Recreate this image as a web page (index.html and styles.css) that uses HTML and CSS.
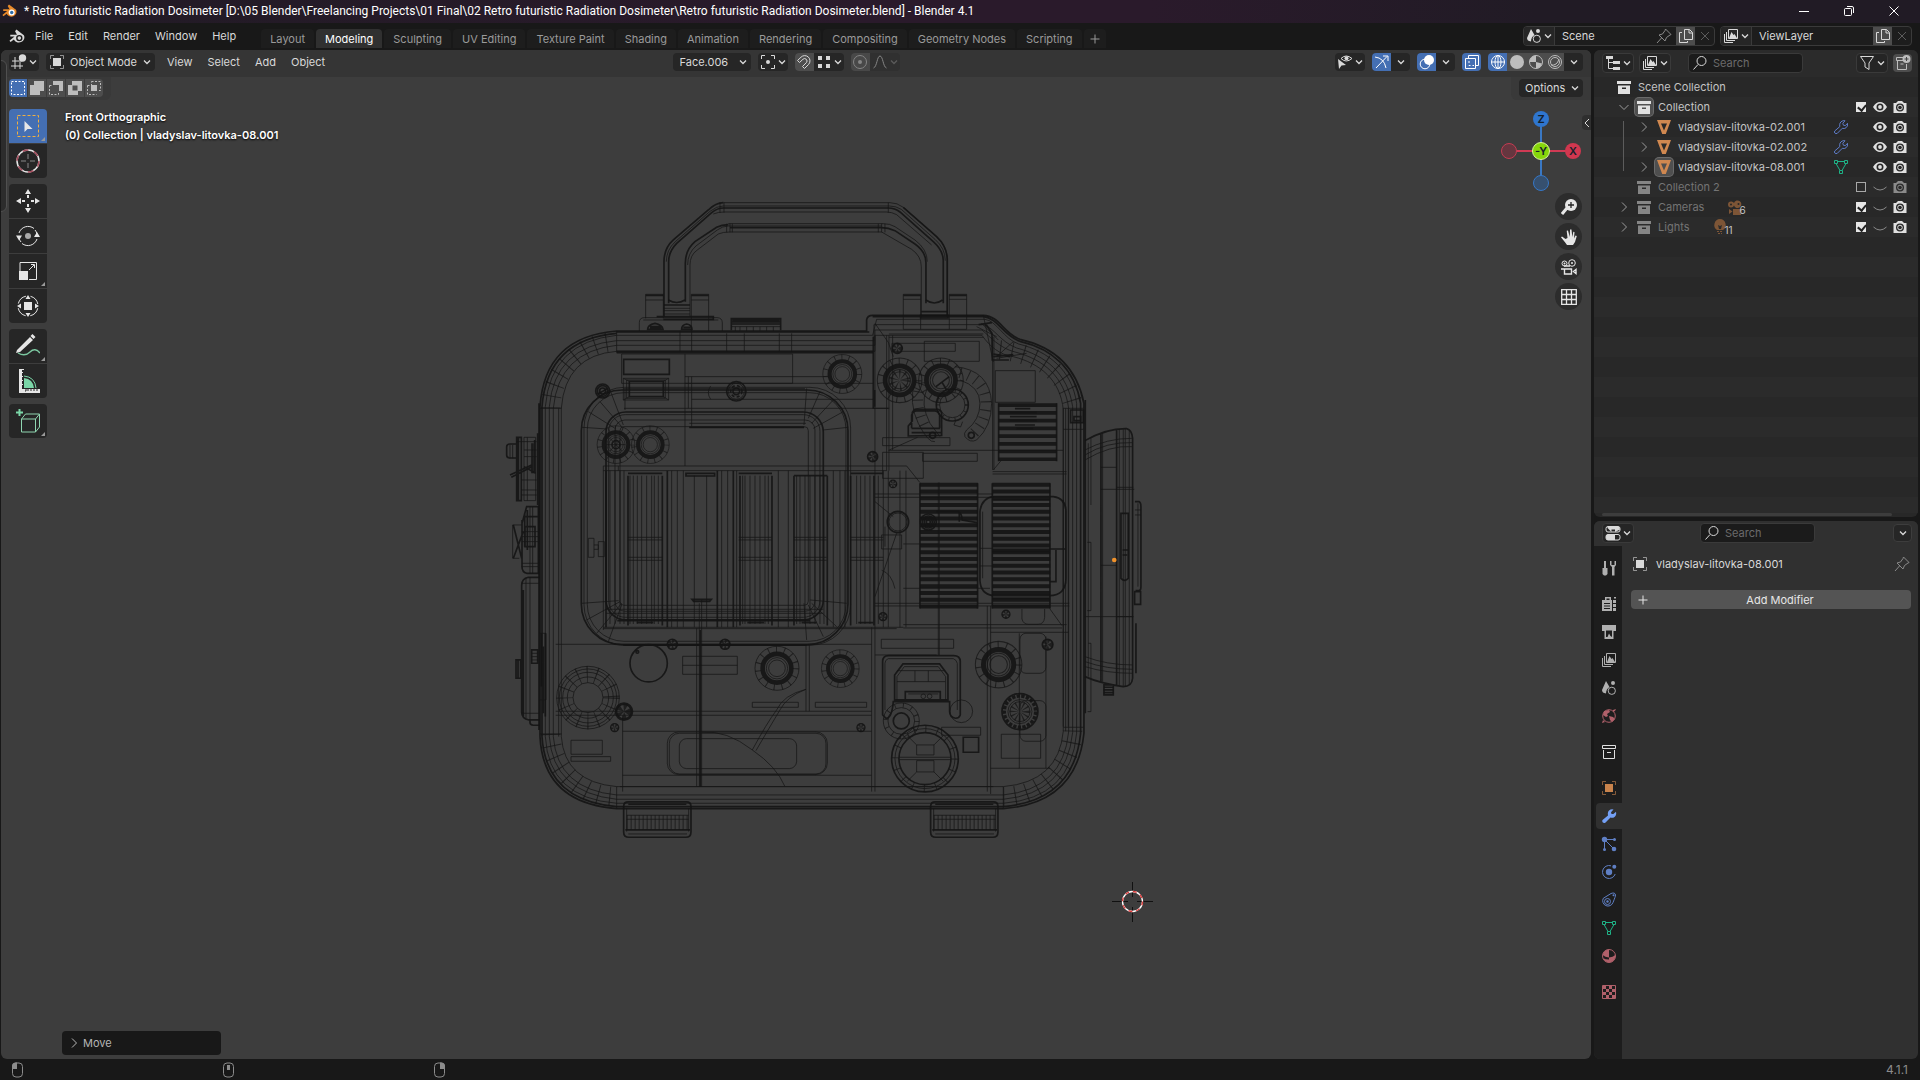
FILE: index.html
```html
<!doctype html>
<html lang="en">
<head>
<meta charset="utf-8">
<title>Retro futuristic Radiation Dosimeter - Blender 4.1</title>
<link rel="stylesheet" href="styles.css">
</head>
<body>
<svg class="defs" aria-hidden="true">
	<symbol id="chev" viewBox="0 0 8 8"><path class="ln" d="M1 2.500l3 3 3-3" stroke-width="1.300"/></symbol>
	<symbol id="chev-r" viewBox="0 0 8 12"><path class="ln" d="M2 1.500L6.500 6 2 10.500"/></symbol>
	<symbol id="cross" viewBox="0 0 16 16"><path class="ln" d="M4 4l8 8M12 4l-8 8"/></symbol>
	<symbol id="logo" viewBox="0 0 16 16"><path d="M7 1.500l7 5.300a4.900 4.600 0 1 1-9.400 4L1.500 13.200.4 12 5.200 8H1.200V6.300h6.300L5.700 3z"/><circle class="eye" cx="9.700" cy="9.500" r="3"/><circle class="pupil" cx="9.700" cy="9.500" r="1.700"/></symbol>
	<symbol id="view3d" viewBox="0 0 16 16"><path class="ln" d="M1 7h10M0 12h12M4 3v12M9 8v7"/><circle cx="11.500" cy="4" r="3.700"/></symbol>
	<symbol id="object" viewBox="0 0 16 16"><path class="ln dim" d="M1.500 5V1.500H5M11 1.500h3.500V5M14.500 11v3.500H11M5 14.500H1.500V11"/><path d="M4 4h8v8H4z"/></symbol>
	<symbol id="pivot" viewBox="0 0 16 16"><path class="ln" d="M1.500 5V1.500H5M11 1.500h3.500V5M14.500 11v3.500H11M5 14.500H1.500V11"/><circle cx="8" cy="8" r="2"/></symbol>
	<symbol id="magnet" viewBox="0 0 16 16"><path class="ln" d="M1.500 6.500L5 3.200a5.200 5.200 0 0 1 7.500 7.300L8.500 14.500 6.500 12.500 10.300 8.700a2.400 2.400 0 0 0-3.400-3.400L3.500 8.500z"/></symbol>
	<symbol id="snapto" viewBox="0 0 16 16"><path d="M2 2h4v4H2zM10 2h4v4h-4zM2 10h4v4H2zM10 10h4v4h-4z"/></symbol>
	<symbol id="prop" viewBox="0 0 16 16"><circle class="ln" cx="8" cy="8" r="6.500"/><circle cx="8" cy="8" r="2"/></symbol>
	<symbol id="falloff" viewBox="0 0 16 16"><path class="ln" d="M1.500 14C5 13 5 2 8 2s3 11 6.500 12"/></symbol>
	<symbol id="visib" viewBox="0 0 16 16"><path d="M1 5l1 10 2.500-3.500L9 11z"/><path class="ln" d="M4 4.500Q9-.5 15 4.500 9 9.500 4 4.500z"/><circle cx="9.500" cy="4.300" r="2"/></symbol>
	<symbol id="gizmo" viewBox="0 0 16 16"><path class="ln" d="M1 3q9 1 11 11M2 14L13 2.500M9 2h5v5"/></symbol>
	<symbol id="overlay" viewBox="0 0 16 16"><circle class="ln" cx="6" cy="10" r="4.800"/><circle cx="10" cy="6" r="5"/></symbol>
	<symbol id="xray" viewBox="0 0 16 16"><path class="ln" d="M1.500 4.500h10v10h-10zM4.500 4.500v-3h10v10h-3"/><path class="ln" stroke-dasharray="2 2" d="M5 7v4.500h5"/></symbol>
	<symbol id="wire" viewBox="0 0 16 16"><circle class="ln" cx="8" cy="8" r="6.500"/><ellipse class="ln" cx="8" cy="8" rx="3" ry="6.500"/><path class="ln" d="M1.500 8h13M8 1.500v13"/></symbol>
	<symbol id="solid" viewBox="0 0 16 16"><circle cx="8" cy="8" r="7"/></symbol>
	<symbol id="material" viewBox="0 0 16 16"><circle class="ln" cx="8" cy="8" r="6.500"/><path d="M8 1.500V8H1.500A6.500 6.500 0 0 1 8 1.500zM8 8l6 1.500A6.500 6.500 0 0 1 8 14.500z"/></symbol>
	<!-- material tab: filled ball with two dark quarters -->
	<symbol id="matball" viewBox="0 0 16 16"><circle class="ln" cx="8" cy="8" r="6.500"/><path d="M8 1.500v8Q4 9 1.700 7 2.500 2 8 1.500zM8 9.500q4-.5 6.300-2.500.5 6.500-6.300 7.500zM2 10q2 1.500 6 1.500v3Q3.500 14 2 10z"/></symbol>
	<symbol id="rendered" viewBox="0 0 16 16"><circle class="ln" cx="8" cy="8" r="6.500"/><circle class="ln" cx="8" cy="8" r="4.500"/><path class="ln" d="M4 11q6 1 8-6"/></symbol>
	<symbol id="scene" viewBox="0 0 16 16"><path d="M5 1L1 10q0 3 4 3.500Q5 9 8.500 7zM12 1a2 2 0 1 1 0 4 2 2 0 0 1 0-4z"/><circle class="ln" cx="10.800" cy="10.800" r="3.600"/></symbol>
	<symbol id="layers" viewBox="0 0 16 16"><path class="ln" d="M5.500 1.500h9v9h-9zM3.500 4v8.500H12M1.500 6v8.500H10"/><path d="M6 10l2.500-6 2 3 1-1L14 10z"/></symbol>
	<symbol id="pin" viewBox="0 0 16 16"><path class="ln" d="M1 15l4.500-5M3 7l6 6 1.500-3.500L14 7l1-.5L9.500 1 9 2.500 6.500 6z"/></symbol>
	<symbol id="copy" viewBox="0 0 16 16"><path class="ln" d="M6.500 1.500h5l3 3v7h-8zM11 1.500V5h3.500M4 4.500H1.500v10h8V13"/></symbol>
	<symbol id="outliner" viewBox="0 0 16 16"><path d="M1 1h7v3H1zM8 6h7v3H8zM8 12h7v3H8z"/><path class="ln" d="M3.500 4v9.500H8M3.500 7.500H8"/></symbol>
	<symbol id="search" viewBox="0 0 16 16"><circle class="ln" cx="9.500" cy="6" r="4.500"/><path class="ln" d="M6 9.500L1.500 14.500"/></symbol>
	<symbol id="filter" viewBox="0 0 16 16"><path class="ln" d="M1.500 1.500h13L10 8v6.500L6 12V8z"/></symbol>
	<symbol id="newcol" viewBox="0 0 16 16"><path class="ln" d="M8 2.500H1.500v3h7M2.500 6v8.500h9V9M5.500 9h3"/><path d="M11.500 0a4 4 0 1 1 0 8 4 4 0 0 1 0-8z"/><path d="M11.500 2v4M9.500 4h4" stroke="#444"/></symbol>
	<symbol id="coll" viewBox="0 0 16 16"><path fill-rule="evenodd" d="M1 2h14v3H1zM2 6.500h12V15H2zM6 8.500V10h4V8.500z"/></symbol>
	<symbol id="coll-o" viewBox="0 0 16 16"><path class="ln" d="M1.500 1.500h13v3h-13zM2.500 6v8.500h11V6M6 8.500h4"/></symbol>
	<symbol id="mesh" viewBox="0 0 16 16"><path fill-rule="evenodd" d="M1 1h14L9.800 15H6.200zM5 4.500l3 7 3-7z"/></symbol>
	<symbol id="meshdata" viewBox="0 0 16 16"><path class="ln" d="M1.500 1.500h3v3h-3zM11.500 1.500h3v3h-3zM6.500 11.500h3v3h-3zM4.500 2.500h7M3 4.500l4 7M13 4.500l-4 7"/></symbol>
	<symbol id="wrench" viewBox="0 0 16 16"><path d="M1.500 12L7 7.500Q6 3 9.500 1.500q1.500-.7 3 0L10 4.200l.5 1.700 1.900.2L15 3.700q.8 3.500-1.500 5.200-1.800 1.300-4 .6L4.300 14.800q-1.600.8-2.700-.5-.8-1.300-.1-2.300z"/></symbol>
	<symbol id="wrench-o" viewBox="0 0 16 16"><path class="ln" d="M1.700 12L6.800 7.600Q6 3.500 9.300 2q1.500-.7 2.700-.2L9.800 4.200l.6 2 2 .4L14.500 4.300q.6 3-1.500 4.500-1.700 1.200-3.700.5L4.300 14.300q-1.600.8-2.500-.3-.7-1.100-.1-2z"/></symbol>
	<symbol id="eye" viewBox="0 0 16 16"><path fill-rule="evenodd" d="M1 8q3-5 7-5t7 5q-3 5-7 5T1 8zM8 4.500a3.500 3.500 0 1 0 0 7 3.500 3.500 0 0 0 0-7z"/><circle cx="8" cy="8" r="1.900"/></symbol>
	<symbol id="eye-off" viewBox="0 0 16 16"><path class="ln" d="M1.500 8q6.500 6 13 0"/></symbol>
	<symbol id="cam" viewBox="0 0 16 16"><path fill-rule="evenodd" d="M1.500 4H4l2-2h4l2 2h2.500v10h-13zM8 4.500a4 4 0 1 0 0 8 4 4 0 0 0 0-8z"/><circle class="ln" cx="8" cy="8.500" r="2.300"/></symbol>
	<symbol id="movie" viewBox="0 0 16 16"><path fill-rule="evenodd" d="M4 2.500a3 3 0 0 0 0 6 3 3 0 0 0 3-2 3.800 3.800 0 1 0 0-2.500 3 3 0 0 0-3-1.500zM4 4.500a1 1 0 1 1 0 2 1 1 0 0 1 0-2zM11.500 4a1 1 0 1 1 0 2 1 1 0 0 1 0-2z"/><path d="M6 10h8v6H6zM2 10l3.500 2.500L2 15z"/></symbol>
	<symbol id="bulb" viewBox="0 0 16 16"><path fill-rule="evenodd" d="M8 0a6 6 0 0 1 3 11H5A6 6 0 0 1 8 0zM6 6l1 4h2l1-4-2 1z"/><path class="ln" stroke-dasharray="2 1" d="M5 12.500h6M6 14.500h4"/></symbol>
	<symbol id="props" viewBox="0 0 16 16"><rect class="ln" x="1" y="1.500" width="14" height="5.500" rx="2"/><rect class="ln" x="1" y="9.500" width="14" height="5.500" rx="2"/><path d="M2.500 1.500H13Q15 2 15 4.500L10 7V4.500H6.500V7L2.500 3zM2.500 9.500H10V15H2.500Q1 15 1 12t1.500-2.500z"/></symbol>
	<symbol id="tool" viewBox="0 0 16 16"><path d="M3 1h2v7h1.500v6L5 15.500H3L1.500 14V8H3zM9 1v4l2 2v8.500h2.500V7L15 5V1h-1.500v4h-3V1z"/></symbol>
	<symbol id="render" viewBox="0 0 16 16"><path fill-rule="evenodd" d="M4 1h6v3h1v11H1V4h3zM5.500 2.500V4h3V2.500zM3 7v1h6V7zM3 9.500v1h6v-1zM3 12v1h6v-1z"/><path d="M12 4h3v3h-3zM12 8h3v3h-3zM12 12h3v3h-3zM13 1h2v1.500h-2z"/></symbol>
	<symbol id="output" viewBox="0 0 16 16"><path fill-rule="evenodd" d="M1 1h14v6h-2.500v8h-9V7H1zM5 6.500V13h1.500L8 9.500l1.500 2.500L11 13V6.500z"/></symbol>
	<symbol id="world" viewBox="0 0 16 16"><circle class="ln" cx="8" cy="8" r="6.300"/><path d="M3 3l5-1 1 2-3 2 1 2-2 1-3-2zM8 8l4 1 2 2-3 3-2-2zM12 4l2-1 1-2-3 1zM1 15l1-3 2 2z"/></symbol>
	<symbol id="particles" viewBox="0 0 16 16"><circle cx="3.500" cy="3.500" r="2.700"/><circle cx="13" cy="13" r="2.300"/><circle cx="13.500" cy="3.500" r="1.500"/><circle cx="3.500" cy="13.500" r="1.500"/><path class="ln" d="M3.500 3.500h10M3.500 3.500v10M3.500 3.500L13 13"/></symbol>
	<symbol id="physics" viewBox="0 0 16 16"><path class="ln" d="M10 1.800A6.500 6.500 0 1 0 14.200 10"/><circle cx="8" cy="8" r="3.200"/><circle cx="13.300" cy="2.700" r="2"/></symbol>
	<symbol id="constraint" viewBox="0 0 16 16"><path class="ln" d="M2.300 6.300L10 1.500q4-1.500 4.500 1.500 0 1.500-2.500 7.500A5.300 5.300 0 1 1 2.300 6.300z"/><circle class="ln" cx="6.500" cy="9.500" r="3"/><circle cx="6.500" cy="9.500" r="1.200"/><circle cx="12.500" cy="3.300" r="1"/></symbol>
	<symbol id="texture" viewBox="0 0 16 16"><path class="ln" d="M1.500 1.500h13v13h-13z"/><path d="M2 2h3v3H2zM8 2h3v3H8zM5 5h3v3H5zM11 5h3v3h-3zM2 8h3v3H2zM8 8h3v3H8zM5 11h3v3H5zM11 11h3v3h-3z"/></symbol>
	<symbol id="mouse-l" viewBox="0 0 16 16"><rect class="ln" x="2.500" y="1" width="10" height="14" rx="3.500"/><path d="M2 7V4q0-3 3-3.500h2V7z"/></symbol>
	<symbol id="mouse-m" viewBox="0 0 16 16"><rect class="ln" x="2.500" y="1" width="10" height="14" rx="3.500"/><path d="M6 3h3v5H6z"/></symbol>
	<symbol id="mouse-r" viewBox="0 0 16 16"><rect class="ln" x="2.500" y="1" width="10" height="14" rx="3.500"/><path d="M13 7V4q0-3-3-3.500H8V7z"/></symbol>
	<!-- knob seen from the front: scale ring, grip, cap -->
	<symbol id="knob" viewBox="0 0 140 140" overflow="visible">
		<circle class="w" cx="70" cy="70" r="66"/>
		<circle class="w" cx="70" cy="70" r="57" stroke-width="18" stroke-dasharray="3 21"/>
		<circle class="k" cx="70" cy="70" r="43" stroke-width="14"/>
		<circle class="w" cx="70" cy="70" r="32"/><circle class="w" cx="70" cy="70" r="25"/>
	</symbol>
	<symbol id="screw" viewBox="0 0 40 40" overflow="visible"><circle class="k" cx="20" cy="20" r="15"/><circle class="w" cx="20" cy="20" r="8" stroke-width="14" stroke-dasharray="5 4"/></symbol>
</svg>

<header class="titlebar">
	<svg class="i orange"><use href="#logo"/></svg>
	<h1>* Retro futuristic Radiation Dosimeter [D:\05 Blender\Freelancing Projects\01 Final\02 Retro futuristic Radiation Dosimeter\Retro futuristic Radiation Dosimeter.blend] - Blender 4.1</h1>
	<div class="winctl">
		<button aria-label="Minimize"><svg viewBox="0 0 12 12"><path class="ln" d="M1 6.500h10"/></svg></button>
		<button aria-label="Restore"><svg viewBox="0 0 12 12"><rect class="ln" x="1.500" y="3.500" width="7" height="7" rx="1"/><path class="ln" d="M4 1.500h5q1.500 0 1.500 1.500v5"/></svg></button>
		<button aria-label="Close"><svg viewBox="0 0 12 12"><path class="ln" d="M1.500 1.500l9 9M10.500 1.500l-9 9"/></svg></button>
	</div>
</header>

<nav class="topbar">
	<svg class="i app"><use href="#logo"/></svg>
	<div class="menus"><button>File</button><button>Edit</button><button>Render</button><button>Window</button><button>Help</button></div>
	<div class="tabs">
		<button>Layout</button><button class="on">Modeling</button><button>Sculpting</button><button>UV Editing</button><button>Texture Paint</button><button>Shading</button><button>Animation</button><button>Rendering</button><button>Compositing</button><button>Geometry Nodes</button><button>Scripting</button><button class="plus" aria-label="Add workspace"><svg viewBox="0 0 12 12"><path class="ln" d="M6 1.500v9M1.500 6h9"/></svg></button>
	</div>
	<div class="ids">
		<div class="id">
			<button class="drop" aria-label="Browse scene"><svg class="i"><use href="#scene"/></svg><svg class="c"><use href="#chev"/></svg></button>
			<label class="name"><input type="text" value="Scene" aria-label="Scene"><svg class="i faint"><use href="#pin"/></svg></label>
			<button class="sq lit" aria-label="New scene"><svg class="i"><use href="#copy"/></svg></button>
			<button class="sq off" aria-label="Delete scene"><svg class="i"><use href="#cross"/></svg></button>
		</div>
		<div class="id">
			<button class="drop" aria-label="Browse view layer"><svg class="i"><use href="#layers"/></svg><svg class="c"><use href="#chev"/></svg></button>
			<label class="name"><input type="text" value="ViewLayer" aria-label="View layer"></label>
			<button class="sq lit" aria-label="New view layer"><svg class="i"><use href="#copy"/></svg></button>
			<button class="sq off" aria-label="Delete view layer"><svg class="i"><use href="#cross"/></svg></button>
		</div>
	</div>
</nav>

<main class="work">
	<section class="viewport">
		<svg class="scene3d" viewBox="1 50 1590 1009">
			<!-- drawn at 3 units to the pixel -->
			<g transform="translate(500 190) scale(.3333)">
				<!-- handle -->
				<path class="k" d="M492 380V215Q492 175 520 150L625 60Q648 38 670 38M506 340V215Q506 185 530 160L635 68Q652 54 670 54H1165Q1185 54 1200 66L1300 155Q1330 182 1330 212V340M1210 52L1310 140Q1342 170 1342 210V380"/>
				<path class="w" d="M670 38H1170M1170 38Q1192 38 1210 52L1310 140Q1342 170 1342 210V380M499 215Q499 180 526 155L630 64Q650 48 670 48H1168Q1188 48 1204 58L1305 148Q1336 175 1336 212M640 72Q655 66 672 66H1160Q1175 66 1190 74L1295 165"/>
				<path class="k" d="M556 335V220Q556 180 585 155L650 112Q665 104 685 104M690 113H1145Q1165 113 1185 122L1245 162Q1278 185 1278 218V340"/>
				<path class="w" d="M685 101H1150Q1170 101 1185 110L1245 150Q1282 178 1282 215M563 225Q563 190 588 168L652 120Q668 108 685 108H1145M570 380V225Q570 195 592 180L655 132Q668 126 690 126H1145L1235 178Q1264 198 1264 230V380M690 101v26M697 101v26M680 101v26M1135 101v26M1145 101v26M1155 101v26M660 38v30M672 38v30M1165 38v30"/>
				<path class="k" d="M492 345H570M1264 365H1342M505 330q25 15 50 0M1278 330q25 18 50 0M437 316h53M574 316h52M1210 316h52M1348 316h52M470 380h170v8h-150M1262 376h82v8h-82z"/>
				<path class="w" d="M437 385V313h53v72M574 423V313h52v110M437 330h53M574 330h52M492 355H570M492 362H570M492 372H570M1210 418V313h52v105M1348 418V313h52v105H1210M1210 328h52M1348 328h52"/>
				<path class="w" d="M418 423v-25q0-15 15-15h218q16 0 16 16v24M430 390h225M694 410h148M706 410v13M720 410v13M740 410v13M760 410v13M780 410v13M800 410v13M820 410v13"/>
				<path class="k" d="M694 386h148M697 391h142M694 396h148M694 402h148M842 383v38M694 383v38M443 418q0-14 22-18 22 4 24 18zM450 410h34M450 415h34M545 418q0-14 15-16 16 2 16 16zM550 412h22"/>
				<!-- shell -->
				<path class="k" d="M350 423H1100V390Q1102 376 1118 376H1450C1500 378 1510 430 1560 448C1660 470 1730 530 1752 640V1630Q1730 1840 1510 1856H350Q130 1840 120 1640V650Q134 440 350 423z"/>
				<path class="k" d="M350 426H1108M1118 380H1450C1495 384 1508 436 1560 454C1655 476 1724 535 1742 640V1630Q1722 1832 1510 1850H350Q138 1832 126 1640V650Q142 448 350 430M350 484H1120M350 488H1120"/>
				<path class="w" d="M350 436H1118L1130 388H1455C1490 392 1510 446 1556 462C1645 484 1716 540 1730 640V1630Q1714 1824 1510 1840H350Q146 1824 136 1640V650Q152 456 350 436z"/>
				<path class="w" d="M350 452H1122V404H1450C1485 415 1500 455 1550 474C1636 496 1704 550 1718 650V1628Q1700 1810 1510 1828H350Q160 1808 148 1640V650Q164 470 350 452z"/>
				<path class="w" d="M350 466H1125V420H1446C1470 440 1500 475 1545 486C1630 508 1694 560 1706 655V1626Q1690 1798 1510 1815H350Q172 1798 160 1640V655Q176 484 350 466z"/>
				<path class="w" d="M350 484H1125V436H1446C1470 470 1500 495 1540 500C1620 520 1682 570 1690 660V1624Q1676 1776 1510 1790H350Q194 1776 184 1640V655Q196 496 350 484zM176 655V1640M1697 655V1624"/>
				<path class="w" stroke-width="58" stroke-dasharray="3 32" d="M152 655A198 200 0 0 1 350 455M152 1632A198 190 0 0 0 350 1820M1510 1820A208 200 0 0 0 1718 1620M1500 480Q1690 500 1722 655"/>
				<path class="w" d="M120 655h65M350 423v65M120 1632h65M350 1790v65M1510 1790v65M1690 1612h60M1690 655h60M1450 376l30 140M1430 410l60 30M1445 400l50 50M1490 500l50-45M1490 505l90-15M540 423v62M575 423v62M680 430v55M733 430v55M838 430v55M875 430v55"/>
				<path class="k" d="M1436 404l40-6M1456 400l20 30 1 80h50M1480 500l60-6M1480 492l50 8M113 730v215M117 640v980M1756 630v940"/>
				<!-- screen bezel -->
				<rect class="k" x="244" y="600" width="800" height="764" rx="122"/>
				<rect class="w" x="252" y="592" width="800" height="774" rx="122"/>
				<rect class="w" x="262" y="608" width="776" height="746" rx="110"/>
				<rect class="k" x="318" y="666" width="652" height="624" rx="60"/>
				<rect class="w" x="326" y="674" width="634" height="608" rx="50"/>
				<rect class="w" x="345" y="690" width="600" height="574" rx="30"/>
				<rect class="w" x="360" y="710" width="565" height="536" rx="12"/>
				<path class="w" d="M300 635l65 75M265 665l80 50M246 712l75 5M330 600l40 105M375 600v60M920 595l-8 110M960 605l-35 80M1000 630l-65 70M1030 665l-90 50M1045 712l-75 8M246 1240l110-8M260 1290l100-55M290 1330l75-90M325 1355l40-110M920 1350l-8-110M970 1340l-45-95M1010 1310l-75-70M1040 1240l-110-10"/>
				<!-- upper panels -->
				<path class="w" d="M365 492h513v88H365zM555 492V828M370 596h545M372 655H1165M555 560h430M565 560v95M575 560v150M575 628H1120M555 580H1120M632 588q-14 20 0 40M310 828H1220l40 50M310 842H1160M310 828V1320M568 700h350M568 712h345M355 828V842"/>
				<path class="k" d="M371 508h137v45H371zM388 574h102v46H388zM568 712H912"/>
				<path class="w" d="M370 565h136v65H370zM380 570h116v55H380zM370 565l18 9M506 565l-16 9M370 630l18-10M506 630l-16-10"/>
				<circle class="k" cx="308" cy="603" r="21"/><circle class="k" cx="308" cy="603" r="16"/><circle class="k" cx="308" cy="603" r="9"/><path class="k" d="M294 612l28-16"/>
				<circle class="k" cx="709" cy="604" r="29"/><circle class="k" cx="709" cy="604" r="17" stroke-dasharray="9 7"/><circle class="k" cx="709" cy="604" r="10"/><circle class="w" cx="709" cy="604" r="24"/>
				<use href="#knob" x="288" y="704" width="120" height="120"/><use href="#knob" x="391" y="704" width="120" height="120"/>
				<circle class="k" cx="348" cy="764" r="12"/><path class="w" d="M320 764h56M348 736v56M330 745l36 38M366 745l-36 38"/>
				<use href="#knob" x="965" y="490" width="124" height="124"/>
				<!-- vertical fins -->
				<path class="w" stroke-width="3" d="M330 842v460M345 842v460M360 842v460M372 842v460M390 857v445M400 857v445M412 857v445M425 857v445M440 857v445M455 857v445M463 857v445M475 857v445M515 842v470M532 842v470M550 842v470M583 857v455M620 857v455M665 842v470M683 842v470M710 842v470M728 857v445M735 857v445M750 857v445M765 857v445M780 857v445M795 857v445M805 857v445M835 842v470M865 842v470M890 857v445M900 857v445M915 857v445M930 857v445M945 857v445M960 857v445M972 857v445M1000 842v470M1020 842v470M1035 842v470M1070 857v445M1082 857v445M1095 857v445M1110 857v445M1135 857v445M1150 842v470M1165 842v470"/>
				<path class="k" d="M384 850h103M384 857v450M487 857v450M716 850h100M720 857v450M816 857v450M882 857h100M882 857v450M982 857v450M1052 850h98M1052 857v450M1122 857v450M558 850h86v8h-86zM502 842v470M652 842v470M700 842v470M318 842v470"/>
				<path class="w" d="M384 1042h103M384 1050h103M384 1102h103M384 1111h103M716 1042h100M716 1050h100M716 1102h100M716 1111h100M882 1042h98M882 1050h98M882 1102h98M882 1111h98M1050 1042h100M1050 1050h100M1050 1102h100M1050 1111h100M265 1045h17v57h-17zM295 1055h18v45h-18zM282 1065h13v13h-13M318 1258H970M318 1270H970M310 1312H1210M310 1316H1190"/>
				<path class="k" d="M352 1292H930M576 1228h58l-5 6h-48zM410 1298h50M742 1298h50M905 1298h45M1075 1298h45M370 1366H920"/>
				<!-- lower front -->
				<path class="w" d="M167 1363H1115M590 1315V1790M605 1230V1790M598 1240V1790M167 1564H1115M167 1576H1115M918 1363V1564M928 1363V1564M368 1576V1805M368 1624H1115M368 1756H1115M360 1790H1480M548 1399h164v54H548zM548 1426h164M757 1537h138v15H757zM946 1537h154v15H946zM213 1651h94v42h-94zM213 1700h119v14H213z"/>
				<path class="k" d="M601 1320V1790"/>
				<path class="w" d="M918 1498Q850 1515 830 1560Q800 1600 757 1680M918 1498Q860 1520 840 1560Q810 1610 768 1682M606 1627Q680 1620 757 1680Q830 1730 855 1790"/>
				<rect class="w" x="502" y="1626" width="480" height="128" rx="34"/><rect class="w" x="508" y="1630" width="470" height="122" rx="30"/><rect class="w" x="538" y="1646" width="352" height="90" rx="22"/>
				<circle class="k" cx="446" cy="1420" r="56"/><circle class="k" cx="412" cy="1386" r="4"/>
				<use href="#screw" x="497" y="1343" width="40" height="40"/><use href="#screw" x="655" y="1343" width="40" height="40"/><use href="#screw" x="340" y="1533" width="64" height="64"/><use href="#screw" x="328" y="1597" width="32" height="32"/>
				<circle class="w" cx="264" cy="1523" r="94"/><circle class="w" cx="264" cy="1523" r="86"/><circle class="w" cx="264" cy="1523" r="76"/><circle class="w" cx="264" cy="1523" r="62"/><circle class="w" cx="264" cy="1523" r="45"/><circle class="w" cx="264" cy="1523" r="70" stroke-width="50" stroke-dasharray="3 24"/>
				<use href="#knob" x="761" y="1365" width="140" height="140"/><use href="#knob" x="961" y="1376" width="120" height="120"/>
				<!-- feet -->
				<path class="k" d="M371 1850q0-14 14-14h174q14 0 14 14v76q0 16-16 16H387q-16 0-16-16zM1292 1850q0-14 14-14h174q14 0 14 14v76q0 16-16 16H1308q-16 0-16-16z"/>
				<path class="k" d="M376 1920h194M1297 1920h194M385 1843h174M1306 1843h174"/>
				<path class="w" d="M380 1876h186M380 1888h186M1301 1876h186M1301 1888h186M385 1932h176M1306 1932h176M380 1855v70M566 1855v70M1301 1855v70M1487 1855v70"/>
				<path class="w" stroke-width="44" stroke-dasharray="3 9" d="M380 1898h186M1301 1898h186"/>
				<!-- left side parts -->
				<path class="k" d="M50 742h14v190H50zM20 770q0-8 10-8h20v42H30q-10 0-10-8zM30 855l65-30M34 862l62-32M72 830l35 20M96 760v90M104 750v100M55 742v190"/>
				<path class="w" d="M30 765v40M38 765v40M72 742h35v190H72zM50 755h60M72 780h38M72 800h38M64 870h46M64 900h46M64 915h46M82 742v190M100 760v90"/>
				<path class="k" d="M80 950h35v200H80q-14-4-14-20V1000zM70 980h45M75 1010h30v60H75zM66 990v80M74 970v100M82 960v120M40 1005l25 100M40 1105l30-80"/>
				<path class="w" d="M38 1005h28M38 1005v100h20M90 950v200M98 950v200M66 1040h50M66 1130h50M66 1120h50M66 1025h50M66 1055h50"/>
				<path class="k" d="M118 1162H85q-20 4-20 24v380q0 20 22 24h31M90 1590v8q0 8 10 8h18M48 1410h14v55H48zM54 1410v55M95 1380h18v40H95zM70 1200v380M124 1330v160M130 1370v200M136 1330v250"/>
				<path class="w" d="M78 1165v420M90 1162v428M65 1180h52M65 1570h52M118 1330h20v200h-20M95 1390h18M95 1400h18M95 1410h18"/>
				<!-- right column -->
				<path class="w" d="M1125 436V1805M1115 1312V1805M1160 436V842M1167 436V842M1178 436V780M1118 655h50M1167 432H1450M1167 442H1450M1125 400l42 60M1180 500l-14-40M1478 440V840M1482 440V840M1176 460h190v24H1176zM1273 454h165v60H1273zM1486 542h120v95H1486zM1148 743h202v24H1148zM1148 787h122v78H1148zM1268 790h164v24H1268zM1168 780l85-38M1165 781H1690M1480 840l25-30M1478 845H1700M1478 852H1700M1690 655V1610M1705 655V1610M1125 912H1480M1125 922H1480"/>
				<path class="k" d="M1120 440V655M1124 600v50"/>
				<use href="#screw" x="1172" y="455" width="40" height="40"/><use href="#screw" x="1098" y="780" width="40" height="40"/><use href="#screw" x="1164" y="867" width="30" height="30"/>
				<use href="#knob" x="1128" y="500" width="142" height="142"/><circle class="w" cx="1199" cy="571" r="17" stroke-width="30" stroke-dasharray="3 8"/>
				<use href="#knob" x="1252" y="500" width="142" height="142"/>
				<path class="k" d="M1308 590l40-30M1325 575l15 25"/>
				<path class="w" d="M1245 570Q1225 640 1255 700T1305 755M1280 600Q1260 640 1290 700L1320 740M1365 530Q1470 540 1475 640Q1475 710 1430 750Q1410 760 1395 740Q1390 730 1400 720Q1440 690 1440 640Q1440 590 1380 570"/>
				<path class="w" stroke-width="32" stroke-dasharray="3 22" d="M1380 548Q1458 570 1458 640Q1458 700 1412 738M1262 580Q1240 640 1275 710"/>
				<circle class="k" cx="1357" cy="645" r="48"/><circle class="w" cx="1357" cy="645" r="38"/><circle class="w" cx="1357" cy="645" r="43" stroke-width="10" stroke-dasharray="3 16"/>
				<circle class="k" cx="1414" cy="736" r="9"/><circle class="k" cx="1298" cy="736" r="9"/><path class="w" d="M1368 690l-6 15 20 6 6-16"/>
				<path class="k" d="M1225 738v-30l12-15v-25q4-10 14-10h60q12 0 14 12v66zM1235 715v-40q5-12 15-12h55q12 2 14 12v40M1235 715h85M1235 728h90"/>
				<!-- louvres -->
				<path class="k slat" stroke-width="176" stroke-dasharray="11 12.200" d="M1583 640V816"/>
				<path class="k slat" stroke-width="174" stroke-dasharray="12 8.300" d="M1347 878V1260M1564 878V1260"/>
				<path class="k" d="M1260 880v376M1433 880v376M1477 880v376M1650 880v376M1496 640v174M1670 640v174"/>
				<path class="k" d="M1545 656h46M1530 668h80M1530 680h80M1530 692h80M1545 705h60M1550 716h50M1478 930h172M1478 1078h172M1478 1084h172M1478 1225h172"/>
				<path class="k" d="M1480 920h180q38 5 38 45v200q0 52-50 52H1478q-36-6-38-45V965q4-40 40-45M1650 1077h48v6M1668 1080v95h-18"/>
				<path class="w" d="M1440 1075h38M1448 965v200M1440 1128h38M1690 930v270M1145 1141q30 10 40 55M1125 935l55 45M1125 1220L1190 1030M1125 1240H1708M1125 1248H1708M1315 878V1395M1318 878V1395M1145 1035h60v42h-60zM1155 1010v60M1315 1062h-105M1200 842v470M1218 842v470M1210 1195h260"/>
				<circle class="k" cx="1194" cy="996" r="32"/><circle class="w" cx="1194" cy="996" r="27"/><circle class="k" cx="1285" cy="996" r="24"/><circle class="k" cx="1285" cy="996" r="18"/><circle class="k" cx="1285" cy="996" r="12"/><circle class="k" cx="1285" cy="996" r="6"/>
				<path class="k" d="M1310 965h65q10 4 12 25l45 8M1378 965v30"/>
				<use href="#screw" x="1133" y="1264" width="32" height="32"/><use href="#screw" x="1502" y="1257" width="32" height="32"/><use href="#screw" x="1622" y="1343" width="42" height="42"/><use href="#screw" x="1067" y="1597" width="32" height="32"/>
				<path class="w" d="M1210 1304H1700M1210 1314H1686M1462 1248V1805M1472 1248V1812M1472 1327H1705M1144 1348h217v27H1144zM1125 1395H1310M1650 1257l36 50M1566 1257v30q4 16 20 16h28q18 0 20-20v-26M1558 1330V1735M1638 1340V1735M1472 1735H1650M1504 1633h118v72h-118zM1325 1612h117v24H1325z"/>
				<rect class="w" x="1560" y="1330" width="78" height="120" rx="18"/><rect class="w" x="1560" y="1532" width="78" height="122" rx="18"/>
				<path class="k" d="M1148 1575v-160q0-18 18-18h195q20 0 20 18v160q-4 10-14 10-18-2-18-20v-30H1180q-4 50-22 50zM1184 1530v-75l25-33h110l25 33v75zM1216 1530v-25h105v25M1390 1642h46v45h-46z"/>
				<path class="w" d="M1155 1560v-140q0-10 10-14h195q10 4 12 14v140M1191 1530v-70l22-30h102l22 30v70M1191 1475h145M1245 1442v33M1285 1442v33M1191 1442h145M1225 1512h90"/>
				<circle class="w" cx="1270" cy="1519" r="7"/><circle class="w" cx="1289" cy="1519" r="7"/><circle class="w" cx="1384" cy="1564" r="34"/>
				<circle class="k" cx="1204" cy="1593" r="24"/><circle class="w" cx="1204" cy="1593" r="40"/><circle class="w" cx="1204" cy="1593" r="54"/><circle class="w" cx="1204" cy="1593" r="47" stroke-width="14" stroke-dasharray="3 22"/>
				<circle class="k" cx="1275" cy="1706" r="100"/><circle class="k" cx="1275" cy="1706" r="78"/><circle class="w" cx="1275" cy="1706" r="90"/><circle class="w" cx="1275" cy="1706" r="89" stroke-width="22" stroke-dasharray="3 32"/>
				<path class="w" d="M1198 1702h154M1198 1709h154M1250 1665h52v30h-52zM1250 1712h52v34h-52zM1250 1665l-28-28M1302 1665l28-28M1250 1746l-28 28M1302 1746l28 28"/>
				<use href="#knob" x="1422" y="1350" width="148" height="148"/>
				<circle class="k" cx="1560" cy="1565" r="54"/><circle class="k" cx="1560" cy="1565" r="47" stroke-width="10" stroke-dasharray="10 4"/><circle class="w" cx="1560" cy="1565" r="36"/><circle class="w" cx="1560" cy="1565" r="18" stroke-width="26" stroke-dasharray="3 6"/><circle class="w" cx="1560" cy="1565" r="30"/>
				<!-- dish on the right -->
				<path class="k" d="M1755 752Q1820 715 1880 716Q1896 720 1898 745V1465Q1896 1490 1870 1490Q1800 1480 1755 1460M1803 730V1475M1850 718V1485M1905 935h12q6 2 6 15v240q0 12-6 12h-10M1863 970h22v195q-10 12-22 0zM1812 1485h28v30h-28zM1712 660h38v38h-38zM1722 680h20v12h-20z"/>
				<path class="w" d="M1808 730V1475M1858 718V1485M1870 718V1488M1888 722V1485M1876 716V1490M1755 780Q1820 745 1896 745M1755 810Q1830 765 1896 770M1755 795Q1820 755 1898 758M1755 1400Q1820 1425 1898 1425M1755 1430Q1820 1450 1898 1450M1755 1415Q1820 1438 1898 1438M1803 832h48M1803 898h100M1850 892h50M1755 1280h145M1803 1126h48M1850 1280h50M1765 760v700M1773 945V745M1773 1057v205M1762 1057h11M1762 1262h11M1765 1360h8v205h-10M1905 960h18M1905 975h18M1914 940v250M1690 718h60"/>
				<path class="k" d="M1904 1205h18v38h-18zM1908 1300v150M1868 1080h16M1868 1095h14M1812 1492h28M1812 1500h28M1812 1508h28"/>
				<circle cx="1843" cy="1110" r="7" fill="#f0922b"/>
			</g>
			<!-- 3D cursor -->
			<path d="M1112 901.500h16M1137 901.500h16M1132.500 882v15M1132.500 907v15" stroke="#111" fill="none"/>
			<circle cx="1132.500" cy="901.500" r="10" fill="none" stroke="#fff" stroke-width="1.300"/>
			<circle cx="1132.500" cy="901.500" r="10" fill="none" stroke="#e03c3c" stroke-width="1.300" stroke-dasharray="3.930 3.930"/>
		</svg>

		<div class="hd">
			<div class="row">
				<button class="drop" aria-label="Editor type"><svg class="i"><use href="#view3d"/></svg><svg class="c"><use href="#chev"/></svg></button>
				<label class="sel mode"><svg class="i"><use href="#object"/></svg><select aria-label="Mode"><option>Object Mode</option><option>Edit Mode</option></select><svg class="c"><use href="#chev"/></svg></label>
				<div class="menus"><button>View</button><button>Select</button><button>Add</button><button>Object</button></div>
			</div>
			<div class="row mid">
				<label class="sel orient"><select aria-label="Transform orientation"><option>Face.006</option><option>Global</option></select><svg class="c"><use href="#chev"/></svg></label>
				<button class="drop" aria-label="Pivot point"><svg class="i"><use href="#pivot"/></svg><svg class="c"><use href="#chev"/></svg></button>
				<div class="grp"><button class="sq lit" aria-label="Snap"><svg class="i"><use href="#magnet"/></svg></button><button class="drop" aria-label="Snapping"><svg class="i"><use href="#snapto"/></svg><svg class="c"><use href="#chev"/></svg></button></div>
				<div class="grp off"><button class="sq lit" aria-label="Proportional editing"><svg class="i"><use href="#prop"/></svg></button><button class="drop" aria-label="Falloff"><svg class="i"><use href="#falloff"/></svg><svg class="c"><use href="#chev"/></svg></button></div>
			</div>
			<div class="row end">
				<button class="drop" aria-label="Visibility"><svg class="i"><use href="#visib"/></svg><svg class="c"><use href="#chev"/></svg></button>
				<div class="grp"><button class="sq on" aria-label="Gizmos"><svg class="i"><use href="#gizmo"/></svg></button><button class="sq" aria-label="Gizmo options"><svg class="c"><use href="#chev"/></svg></button></div>
				<div class="grp"><button class="sq on" aria-label="Overlays"><svg class="i"><use href="#overlay"/></svg></button><button class="sq" aria-label="Overlay options"><svg class="c"><use href="#chev"/></svg></button></div>
				<div class="grp"><button class="sq on" aria-label="X-ray"><svg class="i"><use href="#xray"/></svg></button></div>
				<div class="grp"><button class="sq on" aria-label="Wireframe"><svg class="i"><use href="#wire"/></svg></button><button class="sq lit" aria-label="Solid"><svg class="i dull"><use href="#solid"/></svg></button><button class="sq lit" aria-label="Material preview"><svg class="i dull"><use href="#material"/></svg></button><button class="sq lit" aria-label="Rendered"><svg class="i dull"><use href="#rendered"/></svg></button><button class="sq" aria-label="Shading options"><svg class="c"><use href="#chev"/></svg></button></div>
			</div>
		</div>
		<div class="hd2">
			<div class="flap left">
				<div class="grp">
					<button class="sq on" aria-label="Set"><svg class="i" viewBox="0 0 16 16"><path class="ln" stroke-dasharray="2 1.500" d="M1.500 1.500h13v13h-13z"/></svg></button>
					<button class="sq lit" aria-label="Extend"><svg class="i dull" viewBox="0 0 16 16"><path d="M5 1h10v10h-4v4H1V5h4z"/></svg></button>
					<button class="sq lit" aria-label="Subtract"><svg class="i dull" viewBox="0 0 16 16"><path d="M5 1h10v10h-4V5H5z"/><path class="ln" stroke-dasharray="2 1.500" d="M1.500 5.500v9h9v-3M1.500 5.500H5"/></svg></button>
					<button class="sq lit" aria-label="Invert"><svg class="i dull" viewBox="0 0 16 16"><path fill-rule="evenodd" d="M5 1h10v10h-4v4H1V5h4zM5.500 5.500v5h5v-5z"/></svg></button>
					<button class="sq lit" aria-label="Intersect"><svg class="i dull" viewBox="0 0 16 16"><path class="ln" stroke-dasharray="2 1.500" d="M5.500 1.500h9v9h-3M1.500 5.500v9h9M1.500 5.500h4v-4"/><path d="M5 5h6v6H5z"/></svg></button>
				</div>
			</div>
			<div class="flap right"><button class="drop options">Options<svg class="c"><use href="#chev"/></svg></button></div>
		</div>

		<div class="edge"></div>
		<div class="body3d">
			<div class="tools">
				<div class="tg">
					<button class="on more" aria-label="Select box"><svg viewBox="0 0 24 24"><path d="M1.500 1.500h21v21h-21z" fill="none" stroke="#f0b040" stroke-dasharray="3 2"/><path d="M8.500 7v11l3-3h5z"/></svg></button>
					<button aria-label="Cursor"><svg viewBox="0 0 24 24"><circle class="ln" cx="12" cy="12" r="11" stroke-width="1.500"/><circle cx="12" cy="12" r="11" fill="none" stroke="#a3495a" stroke-width="1.500" stroke-dasharray="5.760 5.760"/><path d="M12 5v5M12 14v5M5 12h5M14 12h5" stroke="#888"/></svg></button>
				</div>
				<div class="tg">
					<button aria-label="Move"><svg viewBox="0 0 24 24"><path d="M12 0l3 5H9zM12 24l3-5H9zM0 12l5-3v6zM24 12l-5-3v6z"/><path class="ln" stroke-width="2" d="M12 6v3M12 15v3M6 12h3M15 12h3"/></svg></button>
					<button aria-label="Rotate"><svg viewBox="0 0 24 24"><path class="ln" d="M3 9a9.500 9.500 0 0 1 15-4.500M21 15A9.500 9.500 0 0 1 6 19.500M21 10a9 9 0 0 0-2-4M3 14a9 9 0 0 0 2 4"/><path d="M0 11.500h6l-3 5zM18 13h6l-3-5z"/><circle cx="12" cy="12" r="3" fill="#aaa"/></svg></button>
					<button class="more" aria-label="Scale"><svg viewBox="0 0 24 24"><path class="ln" stroke="#aaa" d="M4 13V3.500h16.500v17H13M13 11l5-5M15 5.500h3.500V9"/><path d="M3 12h9v9H3z"/></svg></button>
					<button aria-label="Transform"><svg viewBox="0 0 24 24"><circle class="ln" cx="12" cy="12" r="10" stroke-dasharray="11 4.700" stroke-dashoffset="-2.300"/><path d="M8 8h8v8H8zM12 1l2.500 4h-5zM12 23l2.500-4h-5zM1 12l4-2.500v5zM23 12l-4-2.500v5z"/></svg></button>
				</div>
				<div class="tg">
					<button class="more" aria-label="Annotate"><svg viewBox="0 0 24 24"><path d="M1 16L14 3l3 3L4 18l-4 1zM14.500 2l2-2 3 3-2 2z"/><path d="M2 19q7 4 12-1t10 1" fill="none" stroke="#7bc7a0" stroke-width="1.400"/></svg></button>
					<button aria-label="Measure"><svg viewBox="0 0 24 24"><path d="M3 0h5v1H6v2h1v1H6v3h1v1H6v3h1v1H6v3h1v1H6v4h18v4H3z"/><path d="M8 9q9 1 10 10H8z" fill="#7bd7a8"/><path d="M8 7q11 1 12 12" fill="none" stroke="#7bd7a8"/><path d="M9 22h1v-2M12 22v-2M15 22v-2M18 22v-2M21 22v-2" stroke="#282828"/></svg></button>
				</div>
				<div class="tg">
					<button class="more" aria-label="Add cube"><svg viewBox="0 0 24 24"><path d="M5.500 10h14v13h-14zM5.500 10l4-5h14l-4 5M23.500 5v13l-4 5" fill="none" stroke="#8fd5b0"/><path d="M3.500 0v7M0 3.500h7" stroke="#7bd7a8" stroke-width="2"/></svg></button>
				</div>
			</div>
			<p class="info">Front Orthographic<br>(0) Collection | vladyslav-litovka-08.001</p>
			<div class="nav">
				<svg class="axes" viewBox="0 0 82 82">
					<path d="M41 9v64" stroke="#3a78c4" stroke-width="2"/><path d="M9 41h64" stroke="#d03a54" stroke-width="2"/>
					<circle cx="41" cy="9" r="8" fill="#2f76cf"/><circle cx="41" cy="73" r="7.500" fill="#36506f" stroke="#3678c8"/>
					<circle cx="9" cy="41" r="7.500" fill="#65363f" stroke="#c43c52"/><circle cx="73" cy="41" r="8" fill="#d0374f"/>
					<circle cx="41" cy="41" r="8.500" fill="#86d60a" stroke="#d8f59a"/>
					<text x="41" y="13">Z</text><text x="73" y="45">X</text><text x="41" y="45">-Y</text>
				</svg>
				<button aria-label="Zoom"><svg class="i" viewBox="0 0 16 16"><circle cx="10" cy="6" r="6"/><path d="M6 9l-5 6" stroke="#e6e6e6" stroke-width="3"/><path d="M10 3v6M7 6h6" stroke="#222" stroke-width="1.300"/></svg></button>
				<button aria-label="Pan"><svg class="i" viewBox="0 0 16 16"><path d="M4.500 10L1 7.500l-1 .8 4 5 2 2.700h6l2-3 1.800-6-1.300-.6L13 9.500 13.500 3l-1.200-.3-1 5.300L10.500.5H9L8.800 8 7 1.500l-1.300.3L6.500 9z"/></svg></button>
				<button aria-label="Camera view"><svg class="i" viewBox="0 0 16 16"><circle class="ln" cx="3.500" cy="4.500" r="2.500"/><circle class="ln" cx="11" cy="4" r="3.300"/><circle cx="11" cy="4" r="1"/><circle cx="3.500" cy="4.500" r="1"/><path class="ln" stroke-width="1.400" d="M3.500 10h7v5h-7zM15 10.500v4l-2.500-2zM0 10h3M3 7h6"/></svg></button>
				<button aria-label="Orthographic"><svg class="i" viewBox="0 0 16 16"><path class="ln" stroke-width="1.300" d="M.7.7h14.600v14.600H.7zM5.500.7v14.600M10.500.7v14.600M.7 5.500h14.600M.7 10.500h14.600"/></svg></button>
			</div>
		</div>
		<button class="sidebar-toggle" aria-label="Show sidebar"><svg viewBox="0 0 8 12"><path class="ln" d="M6 2L2 6l4 4"/></svg></button>
		<button class="redo"><svg><use href="#chev-r"/></svg>Move</button>
	</section>

	<aside class="side">
		<section class="outliner">
			<div class="phd">
				<button class="drop" aria-label="Editor type"><svg class="i"><use href="#outliner"/></svg><svg class="c"><use href="#chev"/></svg></button>
				<button class="drop" aria-label="Display mode"><svg class="i"><use href="#layers"/></svg><svg class="c"><use href="#chev"/></svg></button>
				<label class="search"><svg class="i"><use href="#search"/></svg><input type="text" placeholder="Search" aria-label="Filter outliner"></label>
				<button class="drop push" aria-label="Filter"><svg class="i"><use href="#filter"/></svg><svg class="c"><use href="#chev"/></svg></button>
				<button class="sq lit newc" aria-label="New collection"><svg class="i dull"><use href="#newcol"/></svg></button>
			</div>
			<ul class="tree">
				<li class="root"><svg class="i"><use href="#coll"/></svg><span>Scene Collection</span></li>
				<li class="l1"><svg class="tw open"><use href="#chev-r"/></svg><svg class="i hot"><use href="#coll"/></svg><span>Collection</span><div class="tog"><input type="checkbox" checked aria-label="Collection"><svg class="i"><use href="#eye"/></svg><svg class="i"><use href="#cam"/></svg></div></li>
				<li class="l2"><svg class="tw"><use href="#chev-r"/></svg><svg class="i ob"><use href="#mesh"/></svg><span>vladyslav-litovka-02.001</span><svg class="i data blue"><use href="#wrench-o"/></svg><div class="tog"><svg class="i"><use href="#eye"/></svg><svg class="i"><use href="#cam"/></svg></div></li>
				<li class="l2"><svg class="tw"><use href="#chev-r"/></svg><svg class="i ob"><use href="#mesh"/></svg><span>vladyslav-litovka-02.002</span><svg class="i data blue"><use href="#wrench-o"/></svg><div class="tog"><svg class="i"><use href="#eye"/></svg><svg class="i"><use href="#cam"/></svg></div></li>
				<li class="l2"><svg class="tw"><use href="#chev-r"/></svg><svg class="i ob hot"><use href="#mesh"/></svg><span>vladyslav-litovka-08.001</span><svg class="i data green"><use href="#meshdata"/></svg><div class="tog"><svg class="i"><use href="#eye"/></svg><svg class="i"><use href="#cam"/></svg></div></li>
				<li class="l1 mute"><svg class="tw none"></svg><svg class="i"><use href="#coll"/></svg><span>Collection 2</span><div class="tog"><input type="checkbox" aria-label="Collection 2"><svg class="i low"><use href="#eye-off"/></svg><svg class="i low"><use href="#cam"/></svg></div></li>
				<li class="l1 mute"><svg class="tw"><use href="#chev-r"/></svg><svg class="i"><use href="#coll"/></svg><span>Cameras</span><em><svg class="i"><use href="#movie"/></svg><b>6</b></em><div class="tog"><input type="checkbox" checked aria-label="Cameras"><svg class="i low"><use href="#eye-off"/></svg><svg class="i"><use href="#cam"/></svg></div></li>
				<li class="l1 mute"><svg class="tw"><use href="#chev-r"/></svg><svg class="i"><use href="#coll"/></svg><span>Lights</span><em><svg class="i"><use href="#bulb"/></svg><b>11</b></em><div class="tog"><input type="checkbox" checked aria-label="Lights"><svg class="i low"><use href="#eye-off"/></svg><svg class="i"><use href="#cam"/></svg></div></li>
			</ul>
			<div class="scroll"></div>
		</section>

		<section class="props">
			<div class="phd">
				<button class="drop" aria-label="Editor type"><svg class="i"><use href="#props"/></svg><svg class="c"><use href="#chev"/></svg></button>
				<label class="search"><svg class="i"><use href="#search"/></svg><input type="text" placeholder="Search" aria-label="Search properties"></label>
				<button class="sq box" aria-label="Options"><svg class="c"><use href="#chev"/></svg></button>
			</div>
			<div class="pbody">
				<div class="ptabs">
					<button class="last" aria-label="Tool"><svg class="i"><use href="#tool"/></svg></button>
					<button aria-label="Render"><svg class="i"><use href="#render"/></svg></button>
					<button aria-label="Output"><svg class="i"><use href="#output"/></svg></button>
					<button aria-label="View Layer"><svg class="i"><use href="#layers"/></svg></button>
					<button aria-label="Scene"><svg class="i"><use href="#scene"/></svg></button>
					<button class="last red" aria-label="World"><svg class="i"><use href="#world"/></svg></button>
					<button class="last lite" aria-label="Collection"><svg class="i"><use href="#coll-o"/></svg></button>
					<button class="ob" aria-label="Object"><svg class="i"><use href="#object"/></svg></button>
					<button class="on" aria-label="Modifiers"><svg class="i"><use href="#wrench"/></svg></button>
					<button class="phys" aria-label="Particles"><svg class="i"><use href="#particles"/></svg></button>
					<button class="phys" aria-label="Physics"><svg class="i"><use href="#physics"/></svg></button>
					<button class="phys" aria-label="Constraints"><svg class="i"><use href="#constraint"/></svg></button>
					<button class="green" aria-label="Data"><svg class="i"><use href="#meshdata"/></svg></button>
					<button class="last red" aria-label="Material"><svg class="i"><use href="#matball"/></svg></button>
					<button class="last red" aria-label="Texture"><svg class="i"><use href="#texture"/></svg></button>
				</div>
				<div class="panel">
					<div class="crumb"><svg class="i"><use href="#object"/></svg><span>vladyslav-litovka-08.001</span><svg class="i faint"><use href="#pin"/></svg></div>
					<button class="add"><svg viewBox="0 0 12 12"><path class="ln" d="M6 1.500v9M1.500 6h9"/></svg><span>Add Modifier</span></button>
				</div>
			</div>
		</section>
	</aside>
</main>

<footer class="status">
	<svg class="i"><use href="#mouse-l"/></svg>
	<svg class="i"><use href="#mouse-m"/></svg>
	<svg class="i"><use href="#mouse-r"/></svg>
	<span>4.1.1</span>
</footer>
</body>
</html>
```
FILE: styles.css
```css
*{
	margin:0;
	padding:0;
	box-sizing:border-box;
}
body{
	height:100vh;
	display:flex;
	flex-direction:column;
	background:#181818;
	color:#d9d9d9;
	font:11px/16px Inter, "Liberation Sans", sans-serif;
	overflow:hidden;
}
button, input, select{
	font:inherit;
	color:inherit;
	background:none;
	border:0;
	outline:0;
}
button{
	display:flex;
	align-items:center;
	justify-content:center;
}
svg{
	fill:currentColor;
	flex:none;
}
ul{ list-style:none; }
.defs{
	position:absolute;
	width:0;
	height:0;
}
.ln{
	fill:none;
	stroke:currentColor;
}
.dim{ opacity:.6; }
.i{
	width:16px;
	height:16px;
}
.c{
	width:8px;
	height:8px;
}
.eye{ fill:var(--eye, #181818); }
.pupil{ fill:var(--pupil, currentColor); }
.dull{ color:#bdbdbd; }
.faint{ color:#8a8a8a; }

/* window title */
.titlebar{
	height:23px;
	flex:none;
	display:flex;
	align-items:center;
	padding:0 4px 2px 2px;
	gap:6px;
	color:#fff;
	background:linear-gradient(90deg, #211b25, #2a1a2b 45%, #2a1a2b 60%, #211b25 80%);
}
.titlebar h1{
	font:12px/16px Roboto, "Noto Sans", sans-serif;
	white-space:nowrap;
}
.orange{
	color:#e88a2a;
	--eye:#fff;
	--pupil:#2f6ea8;
}
.winctl{
	margin-left:auto;
	display:flex;
}
.winctl button{ width:45px; }
.winctl svg{
	width:12px;
	height:12px;
}

/* menus and workspaces */
.topbar{
	height:27px;
	flex:none;
	display:flex;
	padding:0 8px 0 9px;
}
.app{
	width:17px;
	height:17px;
	margin-top:5px;
}
.menus{
	display:flex;
	align-items:center;
}
.topbar .menus{
	height:26px;
	margin-left:2px;
}
.menus button{ padding:0 8px 0 7px; }
.tabs{
	display:flex;
	gap:2px;
	margin:6px 0 2px 17px;
}
.tabs button{
	padding:0 9px;
	color:#9a9a9a;
	background:#1d1d1d;
	border-radius:4px 4px 0 0;
}
.tabs .on{
	color:#fff;
	background:#303030;
}
.tabs .plus{ padding:0 5px; }
.tabs svg{
	width:12px;
	height:12px;
}
.ids{
	margin:3px 0 4px auto;
	display:flex;
	gap:5px;
}
.id{
	display:flex;
	width:192px;
	border:1px solid #3a3a3a;
	border-radius:4px;
	overflow:hidden;
	background:#1d1d1d;
}
.id .drop{
	border:0;
	border-radius:0;
	height:auto;
	border-right:1px solid #3a3a3a;
}
.id .sq{ height:auto; }
.name{
	flex:1;
	display:flex;
	align-items:center;
	min-width:0;
	padding:0 4px 0 7px;
}
.name input{
	flex:1;
	min-width:0;
}

/* shared header controls */
.drop, .sel{
	display:flex;
	align-items:center;
	justify-content:center;
	gap:2px;
	height:18px;
	min-width:30px;
	padding:0 2px;
	border-radius:4px;
	background:#262626;
}
.sq{
	width:19px;
	height:18px;
}
.lit{ background:#4d4d4d; }
.on.sq{
	background:#446fb3;
	color:#fff;
}
.off{ color:#5c5c5c; }
.grp{
	display:flex;
	border-radius:4px;
	overflow:hidden;
	background:#262626;
}
.grp .drop{
	border-radius:0;
	background:none;
}
.grp.off{
	color:#858585;
	background:#303030;
}
.grp.off .lit{ background:#484848; }
.grp.off .c{ opacity:.5; }
select{
	appearance:none;
	flex:1;
}

.work{
	flex:1;
	display:flex;
	min-height:0;
	gap:3px;
	padding:0 2px 0 1px;
}
.viewport{
	flex:1;
	position:relative;
	overflow:hidden;
	border-radius:6px;
	background:#3d3d3d;
}
.scene3d{
	position:absolute;
	inset:0;
	width:100%;
	height:100%;
}
.w{
	fill:none;
	stroke:#161616;
	stroke-opacity:.75;
}
.w:not([stroke-width]){ stroke-width:3; }
.k{
	fill:none;
	stroke:#141414;
	stroke-opacity:.9;
}
.k:not([stroke-width]){ stroke-width:5; }
.hd{
	position:relative;
	height:27px;
	display:grid;
	grid-template-columns:1fr auto 1fr;
	align-items:center;
	padding:0 8px 3px;
	background:#353535;
}
.row{
	display:flex;
	gap:7px;
}
.mid{ margin-right:20px; }
.end{ justify-content:flex-end; }
.mode{
	width:109px;
	padding:0 4px 0 3px;
	gap:5px;
}
.mode select{ width:60px; }
.orient{
	width:78px;
	padding:0 4px 0 7px;
}
.orient select{ width:50px; }
.hd .menus{ margin-left:-2px; }
.hd2{
	position:relative;
	display:flex;
	justify-content:space-between;
}
.flap{
	height:23px;
	padding:2px 8px 0;
	background:#393939;
}
.flap.left{ border-radius:0 0 6px 0; }
.flap.right{ border-radius:0 0 0 6px; }
.flap .grp{
	gap:1px;
	background:#3d3d3d;
}
.flap .sq{ width:18px; }
.options{
	width:64px;
	justify-content:space-between;
	padding:0 4px 0 6px;
}
.edge{
	position:absolute;
	left:-8px;
	top:10px;
	width:14px;
	height:152px;
	border:1px solid #505050;
	border-radius:6px;
	background:#2c2c2c;
}
.body3d{
	position:relative;
	display:flex;
	align-items:flex-start;
	padding:9px 8px;
}
.tools{
	display:flex;
	flex-direction:column;
	gap:6px;
}
.tg{
	display:flex;
	flex-direction:column;
	gap:1px;
	width:38px;
	border-radius:4px;
	overflow:hidden;
}
.tg button{
	position:relative;
	height:34px;
	background:#262626;
	color:#e6e6e6;
}
.tg .on{ background:#446fb3; }
.tg svg{
	width:24px;
	height:24px;
}
.more::after{
	content:"";
	position:absolute;
	right:2px;
	bottom:2px;
	border:2px solid transparent;
	border-right-color:#9a9a9a;
	border-bottom-color:#9a9a9a;
}
.info{
	margin-left:18px;
	margin-top:-1px;
	color:#fff;
	font-weight:600;
	line-height:18px;
	text-shadow:0 1px 2px #000;
}
.nav{
	margin:1px 1px 0 auto;
	display:flex;
	flex-direction:column;
	align-items:flex-end;
	gap:3px;
}
.axes{
	width:82px;
	height:82px;
	margin-bottom:-2px;
}
.axes text{
	font-size:11px;
	font-weight:600;
	text-anchor:middle;
	fill:#15202c;
}
.nav button{
	width:27px;
	height:27px;
	border-radius:50%;
	background:#2c2c2c;
	color:#e6e6e6;
}
.sidebar-toggle{
	position:absolute;
	right:0;
	top:65px;
	width:9px;
	height:15px;
	border-radius:4px 0 0 4px;
	background:#2f2f2f;
}
.sidebar-toggle svg{
	width:8px;
	height:12px;
}
.redo{
	position:absolute;
	left:61px;
	bottom:4px;
	width:159px;
	height:24px;
	justify-content:flex-start;
	gap:5px;
	padding-left:8px;
	border-radius:4px;
	background:#181818;
	color:#b5b5b5;
}
.redo svg{
	width:8px;
	height:12px;
}

/* right hand editors */
.side{
	width:324px;
	display:flex;
	flex-direction:column;
	gap:4px;
}
.outliner{
	flex:467 0 0;
	display:flex;
	flex-direction:column;
	border-radius:6px;
	overflow:hidden;
	background:#282828;
}
.phd{
	display:flex;
	align-items:center;
	gap:5px;
	height:27px;
	flex:none;
	padding:0 6px 2px 8px;
	background:#2b2b2b;
}
.phd .drop{
	width:32px;
	height:20px;
	border:1px solid #3a3a3a;
	background:#252525;
}
.search{
	display:flex;
	align-items:center;
	gap:5px;
	width:115px;
	height:20px;
	padding:0 4px 0 3px;
	border:1px solid #3a3a3a;
	border-radius:4px;
	background:#1b1b1b;
}
.search input{
	flex:1;
	min-width:0;
}
.search input::placeholder{ color:#6b6b6b; }
.outliner .search{ margin-left:12px; }
.push{ margin-left:auto; }
.newc{ border-radius:4px; }
.tree{
	flex:1;
	position:relative;
	background:repeating-linear-gradient(#282828 0 20px, #2b2b2b 20px 40px);
}
.tree::before{
	content:"";
	position:absolute;
	left:29px;
	top:44px;
	width:1px;
	height:50px;
	background:#5c5c5c;
}
.tree li{
	display:flex;
	align-items:center;
	height:20px;
	padding-right:10px;
	color:#c4c4c4;
}
.tree .root{
	padding-left:22px;
	gap:6px;
}
.tree .l1{ padding-left:26px; }
.tree .l2{ padding-left:46px; }
.tree .i{ color:#e0e0e0; }
.tree .ob{ color:#d08850; }
.tree .blue{ color:#5f7dc9; }
.tree .green{ color:#1fb387; }
.tree .low{ color:#8a8a8a; }
.tw{
	width:8px;
	height:12px;
	margin-right:8px;
	color:#9a9a9a;
}
.tw.open{ transform:rotate(90deg); }
.l1 span, .l2 span{ margin-left:6px; }
.tree .hot{
	background:#4f4f4f;
	border-radius:3px;
	box-shadow:0 0 0 1px #4f4f4f, 0 0 0 2px #6b6b6b;
}
.tree .data{
	margin-left:auto;
	margin-right:23px;
}
.tog{
	display:flex;
	align-items:center;
	gap:4px;
}
.tree li > span + .tog, em + .tog{ margin-left:auto; }
.tog input{
	appearance:none;
	position:relative;
	width:10px;
	height:10px;
	margin-right:2px;
	border:1px solid #a8a8a8;
}
.tog input:checked{
	background:#e6e6e6;
	border-color:#e6e6e6;
}
.tog input:checked::after{
	content:"";
	position:absolute;
	left:2px;
	top:0;
	width:4px;
	height:6px;
	border:solid #222;
	border-width:0 2px 2px 0;
	transform:rotate(40deg);
}
.mute span{ color:#747474; }
.tree .mute > .i{ color:#858585; }
.tree em{
	display:flex;
	margin-left:23px;
	font-style:normal;
}
.tree em .i{ color:#7d5536; }
em b{
	font-weight:400;
	font-size:10px;
	line-height:12px;
	margin:5px 0 0 -4px;
}
.scroll{
	height:3px;
	margin:0 26px 1px 8px;
	border-radius:2px;
	background:#3d3d3d;
}

.props{
	flex:538 0 0;
	display:flex;
	flex-direction:column;
	border-radius:6px;
	overflow:hidden;
	background:#303030;
}
.props .phd{
	height:25px;
	justify-content:space-between;
	background:#303030;
}
.props .search{ margin-right:12px; }
.phd .box{
	border:1px solid #3d3d3d;
	border-radius:4px;
	background:#262626;
}
.pbody{
	flex:1;
	display:flex;
}
.ptabs{
	width:28px;
	padding:9px 0 0 2px;
	background:#1d1d1d;
}
.ptabs button{
	width:26px;
	height:26px;
	margin-bottom:2px;
	color:#b0b0b0;
	border-radius:4px 0 0 4px;
}
.ptabs .last{ margin-bottom:10px; }
.ptabs .red{ color:#b0606a; }
.ptabs .lite{ color:#e0e0e0; }
.ptabs .ob{ color:#c9834c; }
.ptabs .phys{ color:#5f7fc4; }
.ptabs .green{ color:#1fb387; }
.ptabs .on{
	color:#74a0f5;
	background:#303030;
}
.panel{
	flex:1;
	padding:8px 7px 0 9px;
}
.crumb{
	display:flex;
	align-items:center;
	height:20px;
	padding:0 1px;
	gap:8px;
}
.crumb .faint{ margin-left:auto; }
.add{
	width:100%;
	height:19px;
	margin-top:16px;
	padding-left:6px;
	border-radius:4px;
	background:#545454;
	color:#e6e6e6;
}
.add svg{
	width:12px;
	height:12px;
}
.add span{ flex:1; }

.status{
	height:21px;
	flex:none;
	display:grid;
	grid-template-columns:211px 211px 16px 1fr;
	align-items:center;
	padding:0 12px 0 10px;
	color:#8c8c8c;
}
.status span{
	font-size:12px;
	text-align:right;
}
```
